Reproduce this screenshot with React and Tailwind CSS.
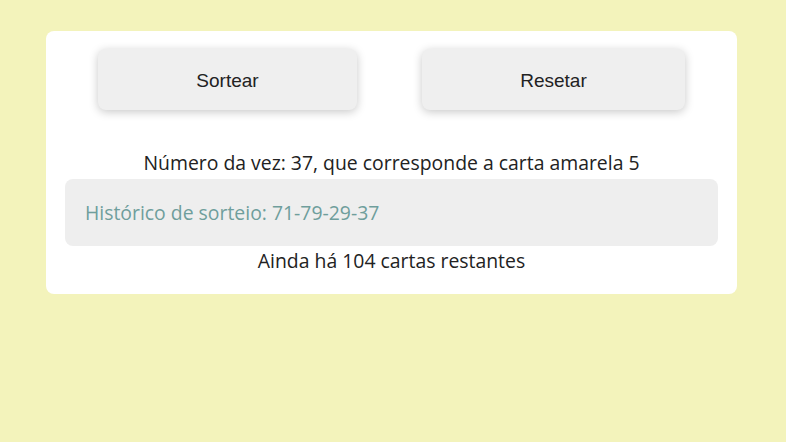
export default function App() {
  return (
    <div className="min-h-[442px] w-full bg-[#f3f3bb] pt-[31px]">
      <main className="ml-[46px] w-[691px] rounded-lg bg-white px-[19px] pb-[20px] pt-[18px] text-[#222]">
        <div className="flex justify-between px-[33px]">
          <button
            type="button"
            className="h-[61px] w-[259px] rounded-lg bg-[#efefef] pt-[3px] text-[19px] text-[#222] shadow-[0_2px_10px_rgba(0,0,0,0.22)] font-['Liberation_Sans',Arial,sans-serif]"
          >
            Sortear
          </button>
          <button
            type="button"
            className="h-[61px] w-[263px] rounded-lg bg-[#efefef] pt-[3px] text-[19px] text-[#222] shadow-[0_2px_10px_rgba(0,0,0,0.22)] font-['Liberation_Sans',Arial,sans-serif]"
          >
            Resetar
          </button>
        </div>

        <div className="font-['Open_Sans',sans-serif] text-[19.4px]">
          <p className="mt-[40px] text-center leading-[26px]">
            Número da vez: 37, que corresponde a carta amarela 5
          </p>
          <div className="mt-[3px] flex h-[67px] items-center rounded-lg bg-[#eeeeee] px-[20px] text-[#6f9e9c]">
            Histórico de sorteio: 71-79-29-37
          </div>
          <p className="mt-[2px] text-center leading-[26px]">Ainda há 104 cartas restantes</p>
        </div>
      </main>
    </div>
  )
}
